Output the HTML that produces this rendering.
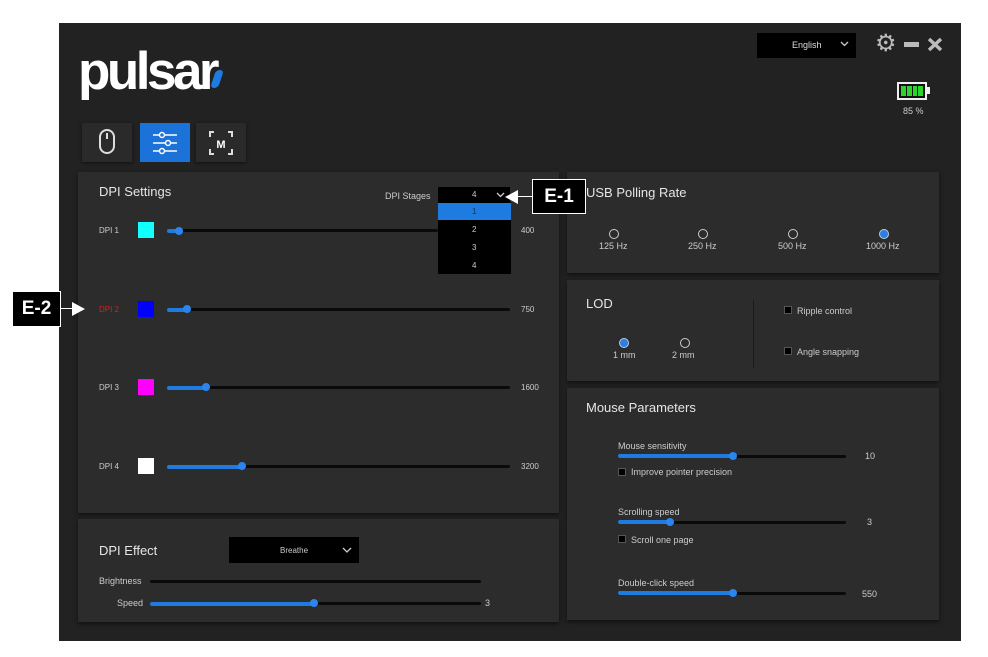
<!DOCTYPE html>
<html><head><meta charset="utf-8"><style>
*{margin:0;padding:0;box-sizing:border-box}
body{width:988px;height:657px;background:#fff;position:relative;overflow:hidden;font-family:"Liberation Sans",sans-serif;color:#ddd}
.a{position:absolute}
.win{left:59px;top:23px;width:902px;height:618px;background:#222}
.pan{background:#2c2c2c;box-shadow:0 2px 4px #111}
.t{font-size:9px;color:#ccc;position:absolute}
.trk{position:absolute;height:3px;background:#0a0a0a;border-radius:2px}
.fill{position:absolute;height:4px;background:#1e7be0;border-radius:2px}
.knob{position:absolute;width:8px;height:8px;border-radius:50%;background:#2a86ee}
.rad{position:absolute;width:10px;height:10px;border:1px solid #ccc;border-radius:50%}
.rad.on{background:#2a7fe0;border-color:#bcd}
.cb{position:absolute;width:8px;height:8px;background:#000;border:1px solid #555}
.h{position:absolute;font-size:13px;color:#e6e6e6}
.lbl{position:absolute;background:#000;color:#fff;font-weight:bold;font-size:19px;border:1px solid #fff;text-align:center}
.chev{position:absolute}
</style></head><body>
<div class="a win"></div>
<div class="a" style="left:78px;top:42px;font-size:53px;font-weight:bold;color:#fff;letter-spacing:-3.5px;line-height:60px">pulsar</div>
<div class="a" style="left:213px;top:70px;width:8px;height:18px;background:#1e7be0;border-radius:4px;transform:skewX(-18deg)"></div>
<div class="a" style="left:82px;top:123px;width:50px;height:39px;background:#2a2a2a;box-shadow:0 1px 3px #111"></div>
<div class="a" style="left:99px;top:129px;width:16px;height:25px;border:2px solid #ddd;border-radius:8px"></div>
<div class="a" style="left:106px;top:133px;width:2px;height:6px;background:#ddd"></div>
<div class="a" style="left:140px;top:123px;width:50px;height:39px;background:#1b72d8"></div>
<svg class="a" style="left:152px;top:131px" width="26" height="24"><g stroke="#fff" stroke-width="1.5" fill="none"><line x1="1" y1="4" x2="25" y2="4"/><line x1="1" y1="12" x2="25" y2="12"/><line x1="1" y1="20" x2="25" y2="20"/><circle cx="10" cy="4" r="2.5" fill="#1b72d8"/><circle cx="16" cy="12" r="2.5" fill="#1b72d8"/><circle cx="10" cy="20" r="2.5" fill="#1b72d8"/></g></svg>
<div class="a" style="left:196px;top:123px;width:50px;height:39px;background:#2a2a2a;box-shadow:0 1px 3px #111"></div>
<svg class="a" style="left:208px;top:130px" width="26" height="26"><g stroke="#ddd" stroke-width="2" fill="none"><path d="M6 2H2V7M20 2H24V7M6 24H2V19M20 24H24V19"/></g><text x="13" y="18" fill="#fff" font-size="11" font-weight="bold" text-anchor="middle" font-family="Liberation Sans">M</text></svg>
<div class="a" style="left:757px;top:33px;width:99px;height:25px;background:#000"></div>
<div class="t" style="left:792px;top:40px;color:#ddd">English</div>
<svg class="chev" style="left:840px;top:41px" width="9" height="6"><path d="M1 1L4.5 4.5L8 1" stroke="#ccc" stroke-width="1.3" fill="none"/></svg>
<div class="a" style="left:875px;top:32px;font-size:24px;color:#bbb;line-height:24px">⚙</div>
<div class="a" style="left:904px;top:42px;width:15px;height:5px;background:#bbb"></div>
<svg class="a" style="left:927px;top:37px" width="16" height="15"><path d="M2 2L14 13M14 2L2 13" stroke="#bbb" stroke-width="3.5"/></svg>
<div class="a" style="left:897px;top:82px;width:30px;height:18px;border:2px solid #eee;background:#111;padding:2px;display:flex;gap:1px"><span style="flex:1;background:#2bd52b"></span><span style="flex:1;background:#2bd52b"></span><span style="flex:1;background:#2bd52b"></span><span style="flex:1;background:#2bd52b"></span></div>
<div class="a" style="left:927px;top:87px;width:3px;height:7px;background:#eee"></div>
<div class="t" style="left:903px;top:106px">85 %</div>

<div class="a pan" style="left:78px;top:172px;width:481px;height:341px"></div>
<div class="h" style="left:99px;top:184px">DPI Settings</div>
<div class="t" style="left:385px;top:191px">DPI Stages</div>
<div class="a" style="left:438px;top:187px;width:72px;height:15px;background:#000"></div>
<div class="t" style="left:472px;top:190px;font-size:8px">4</div>
<svg class="chev" style="left:496px;top:192px" width="9" height="6"><path d="M1 1L4.5 4.5L8 1" stroke="#ccc" stroke-width="1.3" fill="none"/></svg>
<div class="a" style="left:438px;top:202px;width:73px;height:72px;background:#000"></div>
<div class="a" style="left:438px;top:203px;width:73px;height:17px;background:#1e7be0"></div>
<div class="t" style="left:472px;top:207px;font-size:8px;color:#135">1</div>
<div class="t" style="left:472px;top:225px;font-size:8px">2</div>
<div class="t" style="left:472px;top:243px;font-size:8px">3</div>
<div class="t" style="left:472px;top:261px;font-size:8px">4</div>

<div class="t" style="left:99px;top:226px;font-size:8px">DPI 1</div>
<div class="a" style="left:138px;top:222px;width:16px;height:16px;background:#1ff"></div>
<div class="trk" style="left:168px;top:229px;width:270px"></div>
<div class="fill" style="left:167px;top:229px;width:12px"></div><div class="knob" style="left:175px;top:227px"></div>
<div class="t" style="left:521px;top:226px;font-size:8px">400</div>

<div class="t" style="left:99px;top:305px;font-size:8px;color:#c22">DPI 2</div>
<div class="a" style="left:138px;top:301px;width:16px;height:16px;background:#00f"></div>
<div class="trk" style="left:168px;top:308px;width:342px"></div>
<div class="fill" style="left:167px;top:308px;width:20px"></div><div class="knob" style="left:183px;top:305px"></div>
<div class="t" style="left:521px;top:305px;font-size:8px">750</div>

<div class="t" style="left:99px;top:383px;font-size:8px">DPI 3</div>
<div class="a" style="left:138px;top:379px;width:16px;height:16px;background:#f0f"></div>
<div class="trk" style="left:168px;top:386px;width:342px"></div>
<div class="fill" style="left:167px;top:386px;width:39px"></div><div class="knob" style="left:202px;top:383px"></div>
<div class="t" style="left:521px;top:383px;font-size:8px">1600</div>

<div class="t" style="left:99px;top:462px;font-size:8px">DPI 4</div>
<div class="a" style="left:138px;top:458px;width:16px;height:16px;background:#fff"></div>
<div class="trk" style="left:168px;top:465px;width:342px"></div>
<div class="fill" style="left:167px;top:465px;width:75px"></div><div class="knob" style="left:238px;top:462px"></div>
<div class="t" style="left:521px;top:462px;font-size:8px">3200</div>

<div class="a pan" style="left:78px;top:519px;width:481px;height:103px"></div>
<div class="h" style="left:99px;top:543px">DPI Effect</div>
<div class="a" style="left:229px;top:537px;width:130px;height:26px;background:#000"></div>
<div class="t" style="left:280px;top:546px;font-size:8px">Breathe</div>
<svg class="chev" style="left:342px;top:547px" width="10" height="7"><path d="M1 1L5 5L9 1" stroke="#ccc" stroke-width="1.3" fill="none"/></svg>
<div class="t" style="left:99px;top:576px">Brightness</div>
<div class="trk" style="left:150px;top:580px;width:331px"></div>
<div class="t" style="left:117px;top:598px">Speed</div>
<div class="trk" style="left:150px;top:602px;width:331px"></div>
<div class="fill" style="left:150px;top:602px;width:165px"></div><div class="knob" style="left:310px;top:599px"></div>
<div class="t" style="left:485px;top:598px">3</div>

<div class="a pan" style="left:567px;top:172px;width:372px;height:101px"></div>
<div class="h" style="left:586px;top:185px">USB Polling Rate</div>
<div class="rad" style="left:609px;top:229px"></div><div class="t" style="left:599px;top:241px">125 Hz</div>
<div class="rad" style="left:698px;top:229px"></div><div class="t" style="left:688px;top:241px">250 Hz</div>
<div class="rad" style="left:788px;top:229px"></div><div class="t" style="left:778px;top:241px">500 Hz</div>
<div class="rad on" style="left:879px;top:229px"></div><div class="t" style="left:866px;top:241px">1000 Hz</div>

<div class="a pan" style="left:567px;top:280px;width:372px;height:101px"></div>
<div class="h" style="left:586px;top:296px">LOD</div>
<div class="a" style="left:753px;top:300px;width:1px;height:68px;background:#1a1a1a"></div>
<div class="rad on" style="left:619px;top:338px"></div><div class="t" style="left:613px;top:350px">1 mm</div>
<div class="rad" style="left:680px;top:338px"></div><div class="t" style="left:672px;top:350px">2 mm</div>
<div class="cb" style="left:784px;top:306px"></div><div class="t" style="left:797px;top:306px">Ripple control</div>
<div class="cb" style="left:784px;top:347px"></div><div class="t" style="left:797px;top:347px">Angle snapping</div>

<div class="a pan" style="left:567px;top:388px;width:372px;height:232px"></div>
<div class="h" style="left:586px;top:400px">Mouse Parameters</div>
<div class="t" style="left:618px;top:441px">Mouse sensitivity</div>
<div class="trk" style="left:618px;top:455px;width:228px"></div>
<div class="fill" style="left:618px;top:454px;width:115px"></div><div class="knob" style="left:729px;top:452px"></div>
<div class="t" style="left:865px;top:451px">10</div>
<div class="cb" style="left:618px;top:468px"></div><div class="t" style="left:631px;top:467px">Improve pointer precision</div>
<div class="t" style="left:618px;top:507px">Scrolling speed</div>
<div class="trk" style="left:618px;top:521px;width:228px"></div>
<div class="fill" style="left:618px;top:520px;width:52px"></div><div class="knob" style="left:666px;top:518px"></div>
<div class="t" style="left:867px;top:517px">3</div>
<div class="cb" style="left:618px;top:535px"></div><div class="t" style="left:631px;top:535px">Scroll one page</div>
<div class="t" style="left:618px;top:578px">Double-click speed</div>
<div class="trk" style="left:618px;top:592px;width:228px"></div>
<div class="fill" style="left:618px;top:591px;width:115px"></div><div class="knob" style="left:729px;top:589px"></div>
<div class="t" style="left:862px;top:589px">550</div>

<div class="lbl" style="left:532px;top:179px;width:54px;height:35px;line-height:33px">E-1</div>
<div class="a" style="left:518px;top:196px;width:15px;height:1px;background:#fff"></div>
<div class="a" style="left:505px;top:190px;width:0;height:0;border-top:7px solid transparent;border-bottom:7px solid transparent;border-right:13px solid #fff"></div>
<div class="lbl" style="left:12px;top:291px;width:49px;height:36px;line-height:34px">E-2</div>
<div class="a" style="left:61px;top:308px;width:15px;height:1px;background:#fff"></div>
<div class="a" style="left:72px;top:302px;width:0;height:0;border-top:7px solid transparent;border-bottom:7px solid transparent;border-left:13px solid #fff"></div>
</body></html>
